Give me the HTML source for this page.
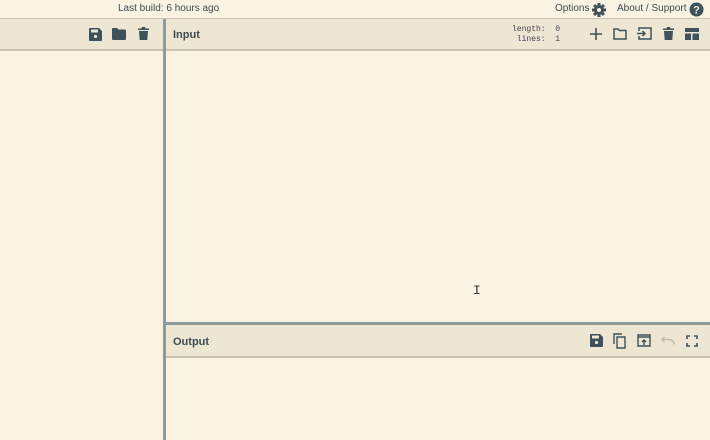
<!DOCTYPE html>
<html><head><meta charset="utf-8"><style>
*{margin:0;padding:0;box-sizing:border-box}
body{width:710px;height:440px;background:#fbf3e1;font-family:"Liberation Sans",sans-serif;position:relative;overflow:hidden;color:#444}
.abs{position:absolute}
.bar{background:#ede6d3;border-bottom:2px solid #c9c3b0}
.t{font-size:10px;color:#3d4b52}
svg{position:absolute}
.ic{fill:#3f525c}
</style></head><body>
<div class="abs t" style="left:118px;top:3px">Last build: 6 hours ago</div>
<div class="abs t" style="left:555px;top:3px">Options</div>
<svg style="left:591px;top:2px" width="16" height="16" viewBox="0 0 16 16"><g class="ic"><circle cx="8" cy="8" r="5"/><rect x="6.5" y="1" width="3" height="14"/><rect x="1" y="6.5" width="14" height="3"/><rect x="6.5" y="1" width="3" height="14" transform="rotate(45 8 8)"/><rect x="6.5" y="1" width="3" height="14" transform="rotate(-45 8 8)"/></g><circle cx="8" cy="8" r="2" fill="#fbf3e1"/></svg>
<div class="abs t" style="left:617px;top:3px">About / Support</div>
<svg style="left:689px;top:2px" width="15" height="15" viewBox="0 0 15 15"><circle cx="7.5" cy="7.5" r="7" fill="#3f525c"/><text x="7.5" y="11.5" font-size="11" font-weight="bold" text-anchor="middle" fill="#fbf3e1" font-family="Liberation Sans">?</text></svg>
<div class="abs" style="left:0;top:18px;width:710px;height:1px;background:#c9c3b0"></div>
<div class="abs bar" style="left:0;top:19px;width:163px;height:32px"></div>
<div class="abs bar" style="left:166px;top:19px;width:544px;height:32px"></div>
<div class="abs" style="left:163px;top:19px;width:3px;height:421px;background:#8e9b9b"></div>
<div class="abs" style="left:173px;top:29px;font-size:11px;font-weight:bold;color:#3d4b52">Input</div>
<div class="abs" style="left:512px;top:25px;font-family:'Liberation Mono',monospace;font-size:8px;color:#445;line-height:10px;white-space:pre">length:  0
 lines:  1</div>
<svg style="left:89px;top:28px" width="13" height="13" viewBox="0 0 13 13"><path class="ic" d="M0 1a1 1 0 0 1 1-1h9l3 3v9a1 1 0 0 1-1 1H1a1 1 0 0 1-1-1z"/><rect x="2" y="1.5" width="7" height="3" fill="#ede6d3"/><circle cx="6.5" cy="8.5" r="1.6" fill="#ede6d3"/></svg>
<svg style="left:112px;top:28px" width="14" height="12" viewBox="0 0 14 12"><path class="ic" d="M0 1a1 1 0 0 1 1-1h4l1.5 1.5H13a1 1 0 0 1 1 1V11a1 1 0 0 1-1 1H1a1 1 0 0 1-1-1z"/></svg>
<svg style="left:138px;top:27px" width="11" height="13" viewBox="0 0 11 13"><path class="ic" d="M0 1.5h3.5l.5-1.5h3l.5 1.5H11V3H0zM1 4h9l-.7 9H1.7z"/></svg>
<svg style="left:590px;top:28px" width="12" height="12" viewBox="0 0 12 12"><path d="M6 0v12M0 6h12" stroke="#3f525c" stroke-width="1.6"/></svg>
<svg style="left:613px;top:28px" width="14" height="12" viewBox="0 0 14 12"><path d="M1 1h4l1.5 1.5H13V11H1z" fill="none" stroke="#3f525c" stroke-width="1.5"/></svg>
<svg style="left:636px;top:27px" width="16" height="13" viewBox="0 0 16 13"><path d="M3 4V1h12v11H3V9M1 6.5h8M6.5 4l2.5 2.5L6.5 9" fill="none" stroke="#3f525c" stroke-width="1.5"/></svg>
<svg style="left:663px;top:27px" width="11" height="13" viewBox="0 0 11 13"><path class="ic" d="M0 1.5h3.5l.5-1.5h3l.5 1.5H11V3H0zM1 4h9l-.7 9H1.7z"/></svg>
<svg style="left:685px;top:28px" width="14" height="12" viewBox="0 0 14 12"><path class="ic" d="M0 0h14v4H0zM0 5.5h6V12H0zM7.5 5.5H14V12H7.5z"/></svg>
<div class="abs" style="left:473px;top:283px;font-family:'Liberation Mono',monospace;font-size:13px;color:#333">I</div>
<div class="abs" style="left:166px;top:322px;width:544px;height:3px;background:#8e9b9b"></div>
<div class="abs bar" style="left:166px;top:325px;width:544px;height:33px"></div>
<div class="abs" style="left:173px;top:336px;font-size:11px;font-weight:bold;color:#3d4b52">Output</div>
<svg style="left:590px;top:334px" width="13" height="13" viewBox="0 0 13 13"><path class="ic" d="M0 1a1 1 0 0 1 1-1h9l3 3v9a1 1 0 0 1-1 1H1a1 1 0 0 1-1-1z"/><rect x="2" y="1.5" width="7" height="3" fill="#ede6d3"/><circle cx="6.5" cy="8.5" r="1.6" fill="#ede6d3"/></svg>
<svg style="left:613px;top:333px" width="14" height="16" viewBox="0 0 14 16"><path d="M1 11V1h8M4 4h8v11H4z" fill="none" stroke="#3f525c" stroke-width="1.4"/></svg>
<svg style="left:637px;top:334px" width="14" height="13" viewBox="0 0 14 13"><path d="M1 1h12v11H1zM1 3h12M7 11V6M5 8l2-2 2 2" fill="none" stroke="#3f525c" stroke-width="1.4"/></svg>
<svg style="left:660px;top:336px" width="15" height="9" viewBox="0 0 15 9"><path d="M2 3.5h7a5 5 0 0 1 5 5M4.5 1L2 3.5 4.5 6" fill="none" stroke="#c3bca9" stroke-width="1.5"/></svg>
<svg style="left:686px;top:335px" width="12" height="12" viewBox="0 0 12 12"><path d="M1 4V1h3M8 1h3v3M11 8v3H8M4 11H1V8" fill="none" stroke="#3f525c" stroke-width="1.6"/></svg>
</body></html>
